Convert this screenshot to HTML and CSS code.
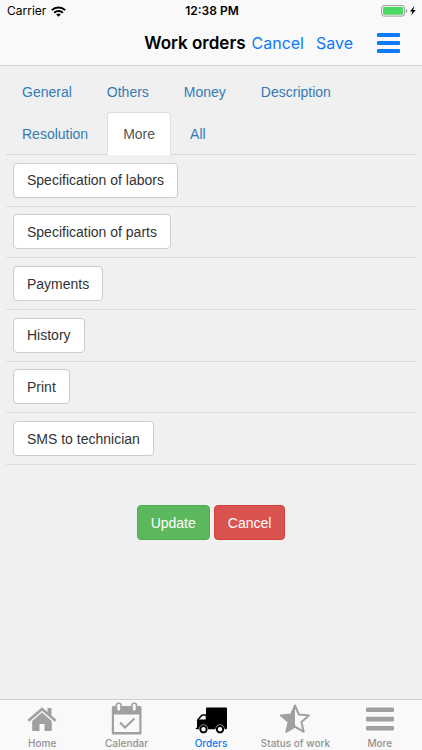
FILE: index.html
```html
<!DOCTYPE html>
<html lang="en">
<head>
<meta charset="utf-8">
<meta name="viewport" content="width=device-width, initial-scale=1">
<title>Work orders</title>
<link rel="stylesheet" href="styles.css">
</head>
<body>
<header class="top">
  <div class="status">
    <div class="carrier">
      <span>Carrier</span>
      <svg width="15" height="11" viewBox="0 0 15 11" aria-hidden="true"><g fill="none" stroke="#000" stroke-width="2"><path d="M.8 4.1a9.6 9.6 0 0 1 13.4 0"/><path d="M3.2 6.7a6.2 6.2 0 0 1 8.6 0"/></g><path d="M5.2 8.5a3.3 3.3 0 0 1 4.6 0L7.500 10.800z"/></svg>
    </div>
    <span class="clock">12:38 PM</span>
    <div class="power">
      <svg width="36" height="12" viewBox="0 0 36 12" aria-hidden="true"><rect x=".6" y=".6" width="23" height="10.500" rx="2.500" fill="none" stroke="#9a9a9a"/><rect x="2" y="2" width="20.200" height="7.700" rx="1.200" fill="#4cd964"/><path d="M25 4q1.300.3 1.300 1.900T25 7.800z" fill="#9a9a9a"/><path d="M33.500 0.800 29 6.400h2.500L30 10.800l4.700-5.900h-2.600z"/></svg>
    </div>
  </div>
  <div class="nav">
    <h1>Work orders</h1>
    <button type="button" class="nav-link">Cancel</button>
    <button type="button" class="nav-link save">Save</button>
    <button type="button" class="menu" aria-label="Menu">
      <svg width="23" height="20" viewBox="0 0 23 20" fill="#0f7af5" aria-hidden="true"><rect width="23" height="4" rx="1"/><rect y="8" width="23" height="4" rx="1"/><rect y="16" width="23" height="4" rx="1"/></svg>
    </button>
  </div>
</header>
<main class="content">
  <nav class="tabs">
    <a href="#general">General</a>
    <a href="#others">Others</a>
    <a href="#money">Money</a>
    <a href="#description">Description</a>
    <a href="#resolution">Resolution</a>
    <a href="#more" class="active">More</a>
    <a href="#all">All</a>
  </nav>
  <ul class="rows">
    <li><button type="button" class="btn">Specification of labors</button></li>
    <li><button type="button" class="btn">Specification of parts</button></li>
    <li><button type="button" class="btn">Payments</button></li>
    <li><button type="button" class="btn">History</button></li>
    <li><button type="button" class="btn">Print</button></li>
    <li><button type="button" class="btn">SMS to technician</button></li>
  </ul>
  <div class="submit">
    <button type="button" class="btn update">Update</button>
    <button type="button" class="btn cancel">Cancel</button>
  </div>
</main>
<nav class="tabbar">
  <a href="#home">
    <svg width="30" height="34" viewBox="0 0 30 34" aria-hidden="true"><path fill="#a0a0a0" d="M15 11.600 24.800 20v9q0 1-1 1H17.500v-7h-5v7H6.200q-1 0-1-1v-9z"/><path fill="#a0a0a0" d="M15 6.300 20.500 11V7h4v7.400l5 4.300-1.700 2L15 9.700 2.200 20.700.5 18.700z"/></svg>
    <span>Home</span>
  </a>
  <a href="#calendar">
    <svg width="32" height="34" viewBox="0 0 32 34" aria-hidden="true"><path fill="#a0a0a0" fill-rule="evenodd" d="M2 5h27q1.500 0 1.500 1.500v25.800q0 1.200-1.500 1.200H2Q.8 33.500.8 32.300V6.500Q.8 5 2 5M3 13.500V31h25.300V13.500z"/><rect x="5.500" y="2.300" width="4.500" height="8" rx="2" fill="#f9f9f9" stroke="#a0a0a0" stroke-width="1.600"/><rect x="21" y="2.300" width="4.500" height="8" rx="2" fill="#f9f9f9" stroke="#a0a0a0" stroke-width="1.600"/><path fill="none" stroke="#a0a0a0" stroke-width="2" d="m9 21.500 5 5 9.500-9"/></svg>
    <span>Calendar</span>
  </a>
  <a href="#orders" class="current">
    <svg width="32" height="34" viewBox="0 0 32 34" aria-hidden="true"><path fill-rule="evenodd" d="M12 6.500h19q1 0 1 1V27q0 1.300-1 1.300H1.500q-.8 0-.8-.8t.8-.8h.5V19.500q0-1 .7-1.800l3.300-3.600q.8-.8 2-.8H11V7.500q0-1 1-1M4 18.500h6.700v-3.700H8q-.6 0-1 .5z"/><circle cx="8.500" cy="28.200" r="4.600" fill="#f9f9f9"/><circle cx="8.500" cy="28.200" r="3.200" fill="#f9f9f9" stroke="#000" stroke-width="1.900"/><circle cx="25" cy="28.200" r="4.600" fill="#f9f9f9"/><circle cx="25" cy="28.200" r="3.200" fill="#f9f9f9" stroke="#000" stroke-width="1.900"/></svg>
    <span>Orders</span>
  </a>
  <a href="#status">
    <svg width="32" height="34" viewBox="0 0 32 34" aria-hidden="true"><path fill="none" stroke="#a0a0a0" stroke-width="2" stroke-linejoin="round" d="m16 4.500 3.900 9 10 .9-7.500 6.600 2.300 9.800L16 25.600l-8.700 5.200L9.600 21 2 14.400l10.100-.9z"/><path fill="#a0a0a0" d="M16 4.500v21.100l-8.700 5.200L9.600 21 2 14.400l10.100-.9z"/></svg>
    <span>Status of work</span>
  </a>
  <a href="#menu">
    <svg width="28" height="34" viewBox="0 0 28 34" fill="#a0a0a0" aria-hidden="true"><rect y="6.500" width="28" height="4.600" rx="1"/><rect y="15.800" width="28" height="4.600" rx="1"/><rect y="25" width="28" height="4.600" rx="1"/></svg>
    <span>More</span>
  </a>
</nav>
</body>
</html>
```
FILE: styles.css
```css
* { box-sizing: border-box; }

body {
  margin: 0;
  min-height: 100vh;
  display: flex;
  flex-direction: column;
  background: #f0f0f0;
  color: #333;
  font: 14px/20px "Liberation Sans", Arial, sans-serif;
}

a { text-decoration: none; }
button { font: inherit; cursor: pointer; }
svg { display: block; }

.top {
  background: #f9f9f9;
  border-bottom: 1px solid #cfcfcf;
  color: #000;
  font-family: Inter, Roboto, sans-serif;
}

.status {
  display: grid;
  grid-template-columns: 1fr auto 1fr;
  align-items: center;
  height: 21px;
  padding: 1px 5px 0 7px;
  font-size: 12px;
}
.carrier { display: flex; align-items: center; gap: 5px; }
.clock { font-weight: 600; }
.power { display: flex; justify-content: flex-end; }

.nav {
  display: flex;
  align-items: center;
  justify-content: flex-end;
  height: 44px;
  padding-right: 22px;
}
.nav h1 {
  margin: 0 6px 0 0;
  font-size: 17px;
  font-weight: 600;
  white-space: nowrap;
}
.nav-link, .menu { padding: 0; border: 0; background: none; }
.nav-link { margin-right: 12px; color: #0f7af5; font-size: 16px; }
.save { margin-right: 24px; }

.content { flex: 1; padding: 4px 6px 24px; }

.tabs {
  display: flex;
  flex-wrap: wrap;
  border-bottom: 1px solid #d9d9d9;
}
.tabs a {
  margin: 0 3px -1px 0;
  padding: 11px 15px 10px;
  border: 1px solid transparent;
  border-radius: 4px 4px 0 0;
  color: #337ab7;
}
.tabs .active {
  background: #fff;
  border-color: #ddd #ddd #fff;
  color: #555;
}

.rows {
  display: grid;
  grid-auto-rows: 1fr;
  min-height: 310px;
  margin: 0;
  padding: 0;
  list-style: none;
}
.rows li {
  display: flex;
  align-items: center;
  padding: 0 7px;
  border-bottom: 1px solid #dcdcdc;
}

.btn {
  height: 35px;
  padding: 0 13px;
  border: 1px solid #ccc;
  border-radius: 4px;
  background: #fff;
  color: #333;
}
.submit {
  display: flex;
  justify-content: center;
  gap: 4px;
  margin-top: 40px;
}
.update { background: #5cb85c; border-color: #4cae4c; color: #fff; }
.cancel { background: #d9534f; border-color: #d43f3a; color: #fff; }

.tabbar {
  display: grid;
  grid-template-columns: repeat(5, 1fr);
  height: 51px;
  background: #f9f9f9;
  border-top: 1px solid #cfcfcf;
  font: 500 10px/14px Inter, Roboto, sans-serif;
}
.tabbar a {
  display: flex;
  flex-direction: column;
  align-items: center;
  gap: 1px;
  padding-top: 1px;
  color: #929292;
  white-space: nowrap;
}
.tabbar .current { color: #0f7af5; }
.tabbar .current svg { fill: #000; }
```
